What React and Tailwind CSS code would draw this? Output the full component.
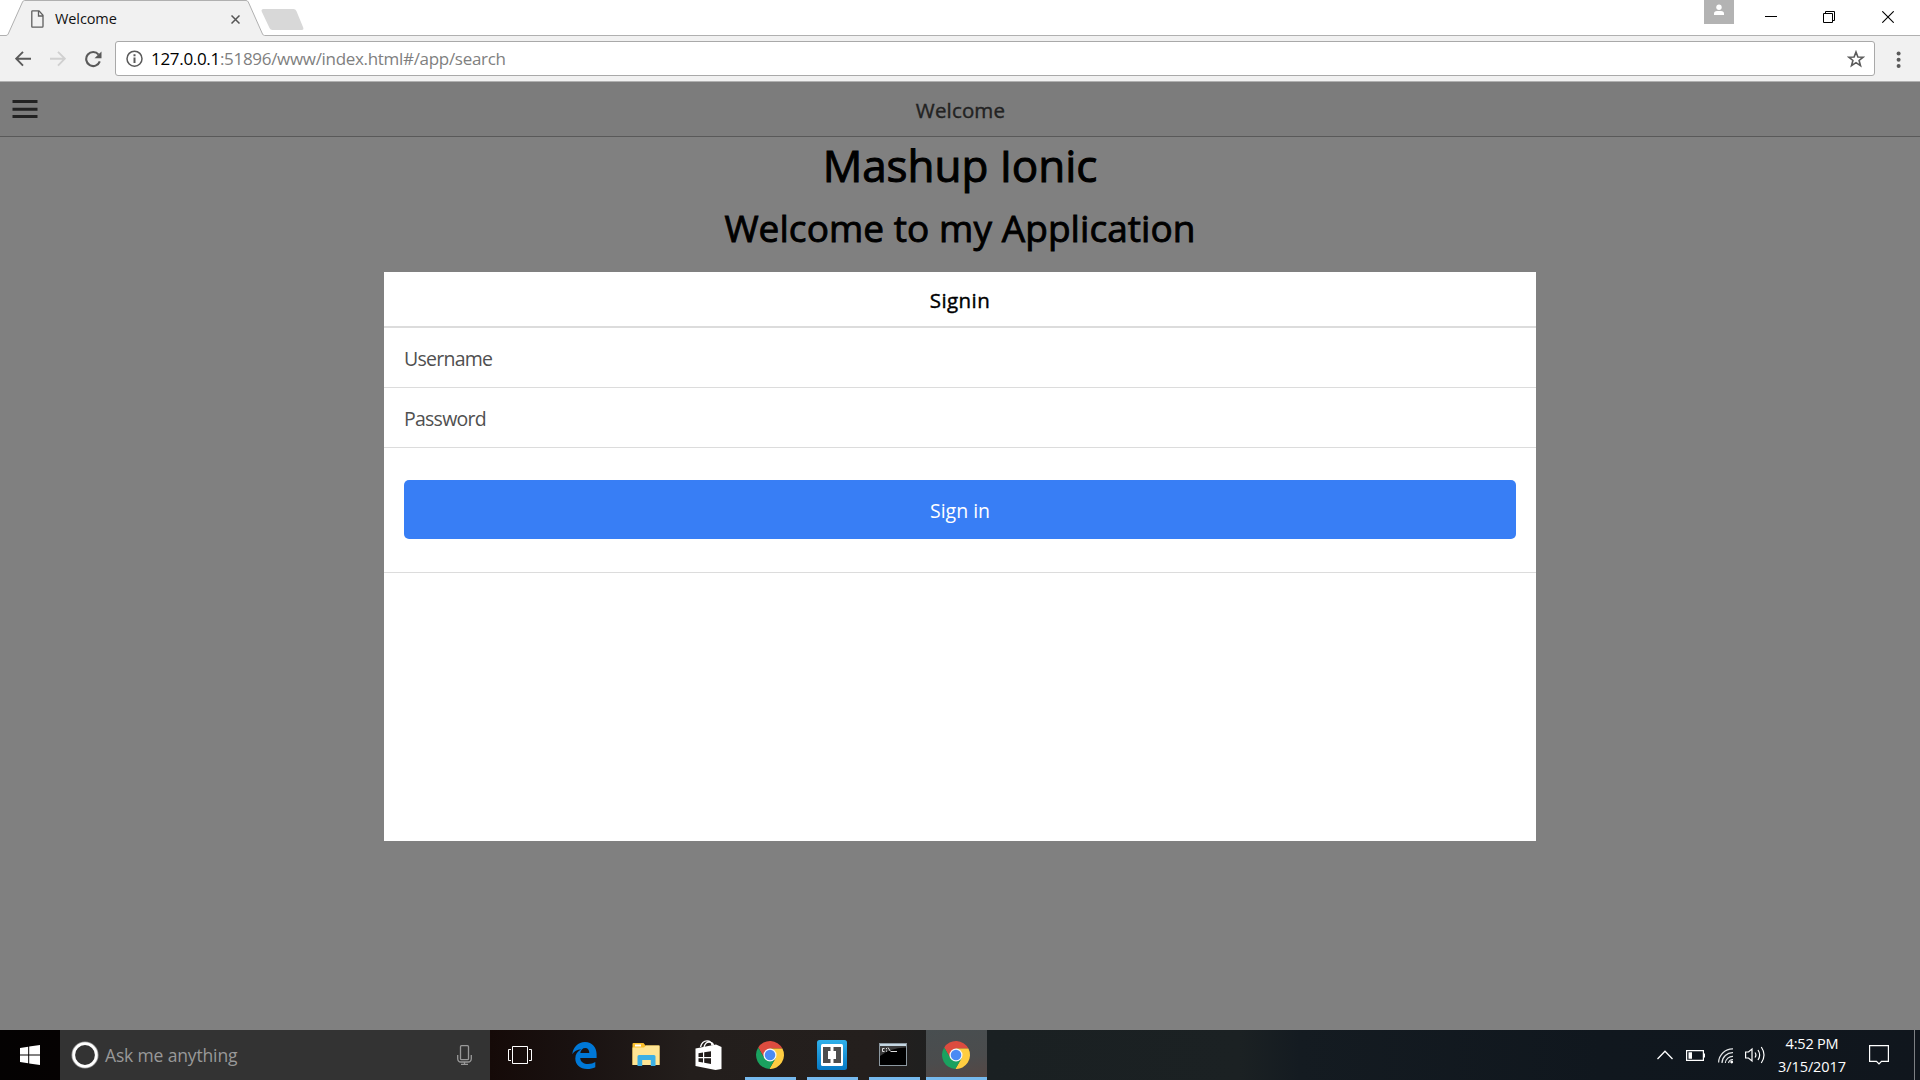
function ChromeLogo() {
  return (
    <svg width="28" height="28" viewBox="-24 -24 48 48">
      <path d="M-20.2 -12.9A24 24 0 0 1 21.3 -11L0 -11L0 0L-9.5 5.5Z" fill="#dc4c3f" />
      <path d="M21.3 -11A24 24 0 0 1 -1.1 24L9.5 5.5L0 0L0 -11Z" fill="#ffcd41" />
      <path d="M-1.1 24A24 24 0 0 1 -20.2 -12.9L-9.5 5.5L0 0L9.5 5.5Z" fill="#1aa15f" />
      <circle r="11.2" fill="#f4f6f8" />
      <circle r="9" fill="#4a8af4" />
    </svg>
  );
}

function TabStrip() {
  return (
    <div className="relative flex h-9 shrink-0 bg-white">
      <svg className="absolute inset-0" width="1920" height="36" viewBox="0 0 1920 36">
        <path d="M0 35.5H6Q7.500 35.500 8.200 34L22.500 2Q23.200 .5 24.700 .5H246Q247.500 .5 248.300 2L262.500 34Q263.200 35.500 264.700 35.500H1920V37H0Z" fill="#f1f1f1" stroke="#b0b0b0" />
        <path d="M263.500 9H293.500Q295.500 9 296.400 11L303.200 27.500Q304 30 301.700 30H272.500Q270.300 30 269.500 28L261.700 11.500Q260.900 9 263.500 9Z" fill="#d8d8d8" />
      </svg>
      <div className="relative flex w-[264px] items-center pl-[31px]">
        <svg className="mt-0.5" width="13" height="18" viewBox="0 0 13 18" fill="none" stroke="#5f5f5f" strokeWidth="1.3">
          <path d="M1.400 .8H8L12 5.300V16.300Q12 17.200 11.200 17.200H1.600Q.8 17.200 .8 16.300V1.500Q.8 .8 1.400 .8Z" />
          <path d="M7.500 1V6H12" />
        </svg>
        <span className="ml-[11px] pt-px text-[14.5px] tracking-[-0.1px] text-[#111]">Welcome</span>
        <svg className="absolute left-[231px] top-[15px]" width="9" height="9" viewBox="0 0 9 9" stroke="#555" strokeWidth="1.5">
          <path d="M.5 .5L8.500 8.500M8.500 .5L.5 8.500" />
        </svg>
      </div>
      <div className="relative ml-auto flex">
        <div className="flex h-6 w-[30px] justify-center bg-[#b3b3b3] pt-1">
          <svg width="12" height="12" viewBox="0 0 12 12" fill="#fff">
            <circle cx="6" cy="3.300" r="2.700" />
            <path d="M1 11V9.500Q1 7 4 7H8Q11 7 11 9.500V11Z" />
          </svg>
        </div>
        <svg className="ml-[31px] mt-[11px]" width="12" height="12"><path d="M0 5.500H12" stroke="#000" /></svg>
        <svg className="ml-[46px] mt-[11px]" width="12" height="12" fill="none" stroke="#000">
          <path d="M.5 2.500H9.500V11.500H.5ZM2.500 2.500V.5H11.500V9.500H9.500" />
        </svg>
        <svg className="ml-[47px] mr-[26px] mt-[11px]" width="12" height="12" stroke="#000" strokeWidth="1.1">
          <path d="M.3 .3L11.700 11.700M11.700 .3L.3 11.700" />
        </svg>
      </div>
    </div>
  );
}

function Toolbar() {
  return (
    <div className="flex h-[46px] shrink-0 border-b border-[#b0b0b0] bg-[#f1f1f1] pl-[15px] pt-[5px]">
      <svg className="mt-2.5" width="16" height="16" viewBox="0 0 16 16" fill="none" stroke="#5a5a5a" strokeWidth="1.9">
        <path d="M16 7.700H1.500M8 .8L1.200 7.700L8 14.600" />
      </svg>
      <svg className="ml-[19px] mt-2.5" width="16" height="16" viewBox="0 0 16 16" fill="none" stroke="#d0d0d0" strokeWidth="1.900">
        <path d="M0 7.700H14.500M8 .8L14.800 7.700L8 14.600" />
      </svg>
      <svg className="ml-[19px] mt-2.5" width="17" height="17" viewBox="0 0 17 17">
        <path d="M13.600 3.600A7 7 0 1 0 14.800 10.400" fill="none" stroke="#5a5a5a" strokeWidth="2.100" />
        <path d="M16.500 .5V7.300H9.500Z" fill="#5a5a5a" />
      </svg>
      <div className="ml-[13px] flex h-[35px] w-[1760px] items-center rounded-[3px] border border-[#a9a9a9] bg-white pl-[10px] pr-[9px]">
        <svg width="17" height="17" viewBox="0 0 17 17">
          <circle cx="8.500" cy="8.700" r="7.500" fill="none" stroke="#5a5a5a" strokeWidth="1.500" />
          <path d="M7.500 7.500H9.500V13H7.500ZM7.500 4.300H9.500V6.300H7.500Z" fill="#5a5a5a" />
        </svg>
        <span className="ml-2 text-[17px] tracking-[-0.31px] text-[#808080]">
          <span className="text-black">127.0.0.1</span>:51896/www/index.html#/app/search
        </span>
        <svg className="ml-auto" width="18" height="18" viewBox="0 0 18 18">
          <path d="M9 2L10.900 7L16.200 7.200L12.100 10.500L13.500 15.700L9 12.700L4.500 15.700L5.900 10.500L1.800 7.200L7.100 7Z" fill="none" stroke="#5a5a5a" strokeWidth="1.600" />
        </svg>
      </div>
      <svg className="ml-[21px] mt-2.5" width="6" height="18" viewBox="0 0 6 18" fill="#5a5a5a">
        <circle cx="2.600" cy="2.500" r="2" /><circle cx="2.600" cy="8.800" r="2" /><circle cx="2.600" cy="15" r="2" />
      </svg>
    </div>
  );
}

function SigninModal() {
  return (
    <div className="absolute left-1/2 top-[190px] flex h-[569px] w-[1152px] -translate-x-1/2 flex-col bg-white">
      <div className="flex h-14 items-center justify-center border-b-2 border-[#dcdcdc] pt-0.5 text-[20.5px] tracking-[0.4px] text-black [-webkit-text-stroke:0.4px]">Signin</div>
      <div className="flex h-[60px] items-center border-b border-[#dcdcdc] pl-5 pt-[3px] text-[19.5px] tracking-[-0.75px] text-[#505050]">Username</div>
      <div className="flex h-[60px] items-center border-b border-[#dcdcdc] pl-5 pt-[3px] text-[19.5px] tracking-[-0.75px] text-[#505050]">Password</div>
      <div className="h-[125px] border-b border-[#dcdcdc] px-5 pt-8">
        <button className="flex h-[59px] w-full items-center justify-center rounded-[5px] bg-[#387ef5] pt-0.5 text-[19.5px] text-white">Sign in</button>
      </div>
    </div>
  );
}

function AppView() {
  return (
    <div className="relative flex min-h-0 flex-1 flex-col bg-[#808080]">
      <div className="flex h-[55px] shrink-0 items-center border-b border-[#595959] bg-[#7c7c7c] pl-3">
        <svg width="26" height="18" viewBox="0 0 26 18" fill="#222"><path d="M.5 0H25.500V3H.5ZM.5 7.700H25.500V10.700H.5ZM.5 15H25.500V18H.5Z" /></svg>
        <span className="mr-[37px] flex-1 pt-0.5 text-center text-[20.5px] tracking-[0.15px] text-[#222] [-webkit-text-stroke:0.4px]">Welcome</span>
      </div>
      <h1 className="h-[57px] text-center text-[44px] leading-[57px] tracking-[-0.05px] text-black [-webkit-text-stroke:1px]">Mashup Ionic</h1>
      <h2 className="mt-2 h-[51px] text-center text-[37px] leading-[51px] tracking-[0.07px] text-black [-webkit-text-stroke:0.9px]">Welcome to my Application</h2>
      <SigninModal />
    </div>
  );
}

function Cell({ children, open }) {
  return (
    <div className="relative flex w-[62px] items-center justify-center">
      {children}
      {open && <div className="absolute bottom-0 left-[6px] h-[3px] w-[51px] bg-[#76b9ed]" />}
    </div>
  );
}

function Taskbar() {
  return (
    <div className="flex h-[50px] shrink-0 bg-[linear-gradient(90deg,#040202_0px,#050202_60px,#150a08_490px,#191110_570px,#231e1c_690px,#241f1d_870px,#1a2022_990px,#1b2123_1240px,#141b21_1300px,#10171e_1600px,#10161d_1920px)]">
      <div className="flex w-[60px] items-center justify-center">
        <svg width="20" height="20" viewBox="0 0 20 20" fill="#fff">
          <path d="M0 2.900L8.200 1.800V9.500H0ZM9.200 1.600L20 0V9.500H9.200ZM0 10.500H8.200V18.300L0 17.100ZM9.200 10.500H20V20L9.200 18.400Z" />
        </svg>
      </div>
      <div className="flex w-[430px] items-center bg-[#333] pl-[11px] pr-[18px]">
        <svg width="28" height="28" viewBox="0 0 28 28" fill="none">
          <circle cx="14" cy="14" r="12.800" stroke="#999" strokeWidth="1.500" />
          <circle cx="14" cy="14" r="11.300" stroke="#fff" strokeWidth="2.800" />
        </svg>
        <span className="ml-1.5 text-[17.5px] tracking-[-0.15px] text-[#999]">Ask me anything</span>
        <svg className="ml-auto" width="15" height="20" viewBox="0 0 15 20" fill="none" stroke="#999" strokeWidth="1.300">
          <rect x="3.500" y=".7" width="8" height="14" rx="1" />
          <path d="M.7 10V13.500Q.7 17 4 17H11Q14.300 17 14.300 13.500V10M7.500 17V19.300M4 19.300H11" />
        </svg>
      </div>
      <div className="flex w-[63px] items-center pl-[18px]">
        <svg width="24" height="20" viewBox="0 0 24 20" fill="none" stroke="#fff">
          <path d="M4.500 1.500H19.500V18.500H4.500ZM3 4.500H.5V15.500H3M21 4.500H23.500V15.500H21" />
        </svg>
      </div>
      <Cell>
        <svg width="25" height="27" viewBox="0 0 25 27" fill="#0078d7">
          <path d="M.3 12.200C1.200 5 6 0 13 0C20.500 0 24.600 5.800 24.600 12V16H8.200C8.500 20 12 22 16 22C19 22 21.300 21.200 23.300 20V25.200C21 26.400 18.300 27 15.200 27C8 27 3.300 22.800 3.300 16.500C3.300 12.500 5.500 9.200 9.300 7.300C5 7.600 2 9.300 .3 12.200ZM8.300 11H17.300C17.300 8 16 6 13.300 6C10.500 6 8.700 8 8.300 11Z" fillRule="evenodd" />
        </svg>
      </Cell>
      <Cell>
        <svg width="28" height="24" viewBox="0 0 28 24">
          <path d="M1.500 0H11.500L13.500 2.500H26.500Q27.500 2.500 27.500 3.500V22H.5V1Q.5 0 1.500 0Z" fill="#fbc02d" />
          <path d="M.5 4.500H12L14 2.500H27.500V22H.5Z" fill="#ffe594" />
          <path d="M3 1.500H9V3.500H3Z" fill="#fff" />
          <path d="M5.500 23V13.500Q5.500 12 7 12H22Q23.500 12 23.500 13.500V23H18.800V17H10.200V23Z" fill="#3cb0e5" />
        </svg>
      </Cell>
      <Cell>
        <svg width="27" height="30" viewBox="0 0 27 30">
          <path d="M5.500 7Q7 .8 12 .8Q16.500 .8 17 5.500M9 7Q10.500 2.200 14 2.200Q17.500 2.200 18.500 5" fill="none" stroke="#fff" strokeWidth="1.300" />
          <path d="M.5 8.500L21 4.500L26.500 7V29L20.500 30L.5 26Z" fill="#fff" />
          <path d="M3.500 13.300L8 12.500V17H3.500ZM9.200 12.300L16 11.200V17H9.200ZM3.500 18.200H8V22.500L3.500 21.700ZM9.200 18.200H16V24L9.200 22.800Z" fill="#211c1a" />
        </svg>
      </Cell>
      <Cell open><ChromeLogo /></Cell>
      <Cell open>
        <svg width="30" height="30" viewBox="0 0 30 30">
          <defs><linearGradient id="bk" x1="0" y1="0" x2="0" y2="1"><stop stopColor="#2fb0ea" /><stop offset="1" stopColor="#0779c4" /></linearGradient></defs>
          <rect width="30" height="30" rx="2.500" fill="url(#bk)" />
          <rect x="4" y="4" width="22" height="22" rx="1.500" fill="#fff" />
          <path d="M6 7H13.500V11H11V19H13.500V23H6ZM24 7H16.500V11H19V19H16.500V23H24Z" fill="#4d4d4d" />
        </svg>
      </Cell>
      <Cell open>
        <svg className="-mt-px mr-0.5" width="28" height="23" viewBox="0 0 28 23">
          <rect x=".5" y=".5" width="27" height="22" fill="#000" stroke="#8c98a0" />
          <path d="M1 1H27V3H1Z" fill="#c5d7e2" />
          <path d="M1 3H27V4.500Q10 5 1 13Z" fill="#3b3b3b" />
          <path d="M5.500 5.500H3.500V8.500H5.500M7.500 5V6.200M7.500 7.500V8.700M9 4.500L11.500 8.500M12 8.500H18" fill="none" stroke="#ddd" />
        </svg>
      </Cell>
      <div className="ml-px flex w-[61px] items-center justify-center border-b-[3px] border-[#76b9ed] bg-[linear-gradient(170deg,#484e50,#4b4c4d_60%,#554744)] pr-[2px] pt-[3px]">
        <ChromeLogo />
      </div>
      <div className="ml-auto flex items-center text-white">
        <svg width="16" height="10" viewBox="0 0 16 10" fill="none" stroke="#fff" strokeWidth="1.300"><path d="M.5 9L8 1.300L15.500 9" /></svg>
        <svg className="ml-[13px] mt-px" width="19" height="11" viewBox="0 0 19 11">
          <path d="M.6 .6H17.400V10.400H.6Z" fill="none" stroke="#fff" strokeWidth="1.200" />
          <path d="M2.500 2.300H6V8.700H2.500ZM18 3.500H19V7.500H18Z" fill="#fff" />
        </svg>
        <svg className="ml-[13px] mt-0.5" width="16" height="16" viewBox="0 0 16 16" fill="none" stroke="#e4e6e8" strokeWidth="1.200">
          <path d="M.6 14.500A14 14 0 0 1 15 .9M4 15A10.500 10.500 0 0 1 15 4.700M7.300 15A7.500 7.500 0 0 1 15 8.300M10.500 15A4.500 4.500 0 0 1 15 11.500" />
          <circle cx="13.700" cy="14" r="1.400" fill="#fff" stroke="none" />
        </svg>
        <svg className="ml-[11px]" width="21" height="18" viewBox="0 0 21 18" fill="none" stroke="#fff" strokeWidth="1.200">
          <path d="M.6 6H3.500L7 3V15L3.500 12H.6ZM10 6.500Q11.800 9 10 11.500M13 4Q16.300 9 13 14M16.300 1Q21.700 9 16.300 17" />
        </svg>
        <div className="ml-3 flex w-[68px] flex-col items-center whitespace-nowrap text-[14.5px] leading-[23px]">
          <span className="tracking-[-0.2px]">4:52 PM</span>
          <span className="tracking-[-0.1px]">3/15/2017</span>
        </div>
        <svg className="ml-[23px]" width="20" height="20" viewBox="0 0 20 20" fill="none" stroke="#fff" strokeWidth="1.200">
          <path d="M.6 .6H19.400V16.400H12.500L10 19L7.500 16.400H.6Z" />
        </svg>
        <div className="ml-[25px] mr-[5px] h-[50px] w-px bg-[#7d8084]" />
      </div>
    </div>
  );
}

export default function App() {
  return (
    <div className="flex h-[1080px] w-[1920px] flex-col overflow-hidden font-['Open_Sans','Noto_Sans',sans-serif]">
      <TabStrip />
      <Toolbar />
      <AppView />
      <Taskbar />
    </div>
  );
}
